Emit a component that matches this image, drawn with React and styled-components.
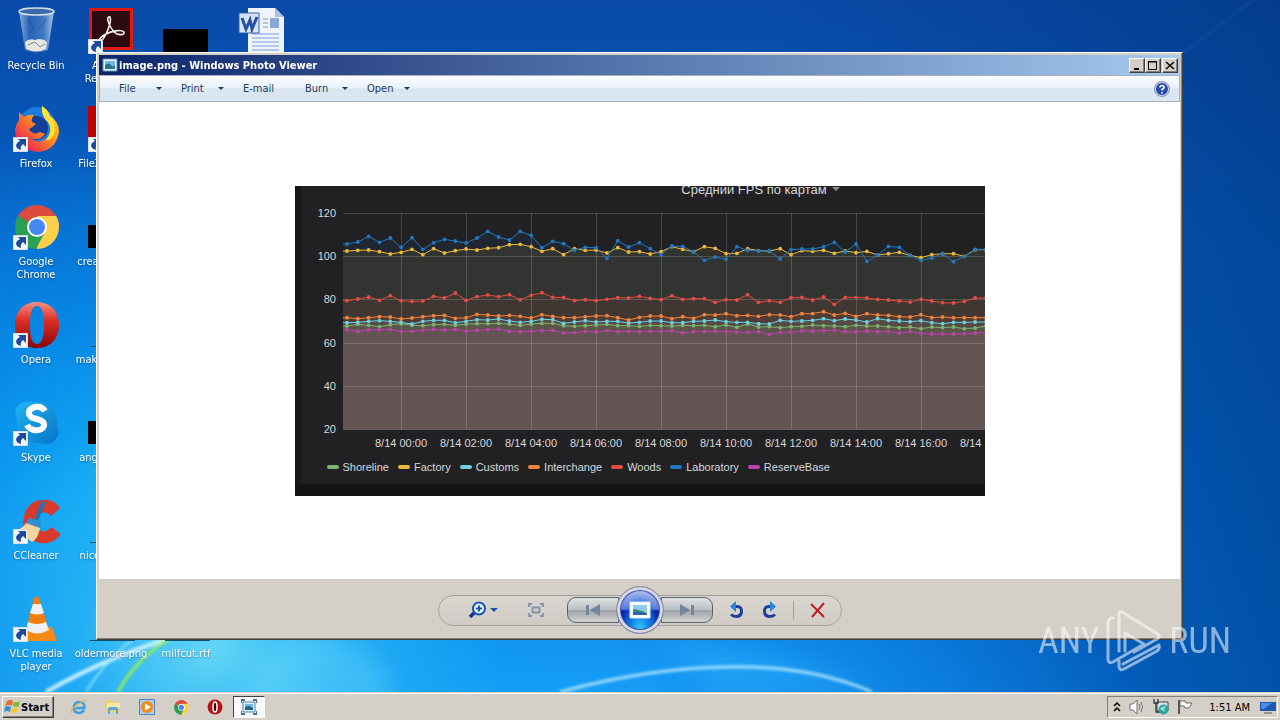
import styled, { createGlobalStyle, css } from "styled-components"

const SERIES = [
    {
        name: "Shoreline",
        color: "#7eb26d",
        fill: 0.12,
        points: [438, 433, 436, 440, 434, 431, 436, 437, 434, 433, 436, 432, 431, 431, 430, 432, 436, 432, 430, 430, 437, 439, 437, 435, 433, 437, 437, 439, 436, 437, 438, 436, 437, 436, 440, 435, 442, 432, 441, 440, 443, 440, 439, 435, 437, 438, 440, 436, 438, 438, 440, 443, 441, 446, 441, 443, 441, 446, 444, 438],
    },
    {
        name: "Factory",
        color: "#eab839",
        fill: 0.09,
        points: [213, 211, 210, 215, 222, 217, 208, 224, 206, 219, 212, 207, 210, 205, 203, 194, 193, 200, 214, 206, 224, 206, 211, 210, 219, 203, 216, 215, 222, 215, 200, 208, 215, 200, 205, 221, 220, 206, 212, 213, 206, 224, 212, 214, 211, 220, 213, 218, 214, 225, 221, 217, 226, 233, 224, 221, 221, 229, 209, 209],
    },
    {
        name: "Customs",
        color: "#6ed0e0",
        fill: 0.12,
        points: [428, 427, 424, 422, 424, 427, 432, 424, 421, 421, 428, 424, 419, 420, 417, 423, 427, 424, 418, 419, 430, 426, 422, 426, 424, 424, 429, 427, 423, 423, 428, 428, 424, 423, 420, 425, 427, 427, 431, 432, 421, 424, 423, 421, 416, 422, 417, 420, 426, 416, 421, 423, 425, 422, 428, 431, 427, 427, 426, 426],
    },
    {
        name: "Interchange",
        color: "#ef843c",
        fill: 0.1,
        points: [413, 416, 413, 410, 411, 417, 414, 410, 407, 406, 415, 413, 403, 405, 408, 406, 409, 414, 404, 409, 413, 413, 410, 408, 407, 413, 420, 412, 408, 408, 416, 410, 415, 404, 405, 401, 407, 406, 409, 404, 405, 410, 401, 401, 395, 405, 400, 409, 401, 405, 406, 410, 411, 404, 413, 411, 413, 413, 413, 413],
    },
    {
        name: "Woods",
        color: "#e24d42",
        fill: 0.1,
        points: [362, 357, 351, 361, 347, 362, 364, 363, 349, 354, 339, 361, 350, 345, 350, 344, 359, 346, 338, 352, 352, 362, 359, 362, 358, 353, 354, 349, 355, 359, 347, 358, 356, 356, 367, 359, 360, 344, 367, 362, 367, 353, 352, 360, 351, 373, 352, 352, 354, 358, 360, 363, 366, 358, 363, 368, 369, 364, 354, 354],
    },
    {
        name: "Laboratory",
        color: "#1f78c1",
        fill: 0.08,
        points: [192, 186, 169, 187, 174, 202, 173, 208, 188, 178, 183, 189, 174, 154, 171, 180, 154, 166, 203, 184, 191, 211, 202, 203, 235, 182, 201, 188, 206, 224, 198, 199, 215, 241, 231, 238, 200, 211, 213, 212, 237, 209, 207, 207, 200, 187, 216, 192, 244, 225, 199, 202, 226, 241, 234, 221, 245, 229, 208, 208],
    },
    {
        name: "ReserveBase",
        color: "#ba43a9",
        fill: 0.1,
        points: [449, 454, 450, 449, 448, 454, 454, 451, 448, 450, 448, 454, 451, 449, 447, 454, 454, 454, 452, 451, 459, 458, 454, 456, 452, 455, 454, 455, 454, 454, 452, 459, 455, 454, 454, 454, 456, 457, 455, 463, 457, 457, 453, 453, 452, 451, 455, 456, 453, 455, 455, 459, 455, 460, 462, 462, 462, 461, 459, 458],
    },
]

const HOURS = ["00", "02", "04", "06", "08", "10", "12", "14", "16", "18"]
const LEVELS = [120, 100, 80, 60, 40, 20]

const px = (i) => 52 + i * 10.83
const py = (v) => v / 3 - 6

function Chart() {
    return (
        <ChartFrame>
            <ChartPanel>
                <ChartTitle>
                    Средний FPS по картам <Caret $color="#8e8e90" />
                </ChartTitle>
                <ChartPlot viewBox="0 0 690 251" role="img" aria-label="Средний FPS по картам">
                    {LEVELS.map((level, i) => (
                        <text key={level} x="41" y={31 + i * 43.2} textAnchor="end">{level}</text>
                    ))}
                    {HOURS.map((hour, i) => (
                        <text key={hour} x={106 + i * 65} y="261" textAnchor="middle">8/14 {hour}:00</text>
                    ))}
                    {SERIES.map((s) => (
                        <path
                            key={s.name}
                            d={`M48 243.5V${py(s.points[0])}L${s.points.map((v, i) => `${px(i)} ${py(v)}`).join("L")}V243.5Z`}
                            fill={s.color}
                            fillOpacity={s.fill}
                        />
                    ))}
                    <g stroke="#fff" strokeOpacity="0.17">
                        {LEVELS.map((level, i) => (
                            <path key={level} d={`M48 ${Math.round(27 + i * 43.2) + 0.5}H690`} />
                        ))}
                        {HOURS.slice(0, 9).map((hour, i) => (
                            <path key={hour} d={`M${106.5 + i * 65} 27V243.5`} />
                        ))}
                    </g>
                    {SERIES.map((s) => (
                        <g key={s.name} fill={s.color}>
                            <path
                                d={`M48 ${py(s.points[0])}L${s.points.map((v, i) => `${px(i)} ${py(v)}`).join("L")}`}
                                fill="none"
                                stroke={s.color}
                            />
                            {s.points.map((v, i) => <circle key={i} cx={px(i)} cy={py(v)} r="1.9" />)}
                        </g>
                    ))}
                </ChartPlot>
                <Legend>
                    {SERIES.map((s) => (
                        <LegendItem key={s.name} $color={s.color}>{s.name}</LegendItem>
                    ))}
                </Legend>
            </ChartPanel>
        </ChartFrame>
    )
}

function BinIcon() {
    return (
        <svg viewBox="0 0 48 48">
            <defs>
                <linearGradient id="bin">
                    <stop offset="0" stopColor="#a9c6e8" stopOpacity=".8" />
                    <stop offset=".3" stopColor="#2f68b8" stopOpacity=".8" />
                    <stop offset=".7" stopColor="#4c84cc" stopOpacity=".8" />
                    <stop offset="1" stopColor="#cfe0f2" stopOpacity=".8" />
                </linearGradient>
            </defs>
            <path d="M7 5L13 44Q24 49 36 44L42 5Z" fill="url(#bin)" />
            <path d="M13 36Q17 32 23 34Q30 31 35 36L34 43Q24 48 14 43Z" fill="#e9e6df" />
            <path d="M16 39L23 36L28 41L33 38M15 13L22 23L17 28M35 12Q31 20 26 22" stroke="#1d4d8c" fill="none" opacity=".6" />
            <ellipse cx="24.500" cy="5.500" rx="17.500" ry="3.500" fill="#3a6cab" stroke="#d6dde4" strokeWidth="1.500" />
        </svg>
    )
}

function AcrobatIcon() {
    return (
        <svg viewBox="0 0 48 48">
            <path d="M2 2H46V44H2Z" fill="#e01b10" />
            <path d="M5 5H43V41H5Z" fill="#2c0a10" />
            <path d="M23 11C18 10 22 20 27 26C31 30 38 29 37 26C34 23 24 25 17 29C11 33 9 38 13 36C19 32 25 15 23 11Z" fill="none" stroke="#f4efef" strokeWidth="1.600" />
        </svg>
    )
}

function WordIcon() {
    return (
        <svg viewBox="0 0 48 48">
            <path d="M11 2H38L47 11V48H11Z" fill="#eef3fc" />
            <path d="M38 2L47 11H38Z" fill="#a9bfe6" />
            <path d="M26 13H31M26 17H31M26 21H31M15 28H42M15 32H42M15 36H42M15 40H42M15 44H42" stroke="#7d9bd1" />
            <path d="M33 12H42V22H33Z" fill="#8ba7da" />
            <path d="M2 7H22V27H2Z" fill="#d7e3f7" stroke="#3b62ac" />
            <path d="M5 12L9 23L13 14L15 23L20 11" fill="none" stroke="#24509f" strokeWidth="3" />
        </svg>
    )
}

function FirefoxIcon() {
    return (
        <svg viewBox="0 0 48 48">
            <defs>
                <linearGradient id="fox" x1="1" y1="0" x2=".2" y2=".8">
                    <stop offset="0" stopColor="#fff13d" />
                    <stop offset=".45" stopColor="#ffa51a" />
                    <stop offset="1" stopColor="#f0304a" />
                </linearGradient>
            </defs>
            <circle cx="25" cy="21" r="18" fill="#1a7be0" />
            <circle cx="24" cy="24" r="12" fill="#133f98" />
            <path d="M7 8L12 13Q16 10 22 11Q19 15 20 18L24 20Q20 24 17 25Q21 32 28 28L33 30Q27 38 18 34Q27 41 35 34Q41 26 36 18Q29 12 30 2Q36 7 37 11Q47 17 47 28Q44 47 25 48Q4 45 3 26Q4 20 7 16Z" fill="url(#fox)" />
            <path d="M30 2Q37 7 38 12Q45 19 42 30Q39 37 34 36Q42 26 36 18Q29 12 30 2Z" fill="#ffe436" />
        </svg>
    )
}

function FileZillaIcon() {
    return (
        <svg viewBox="0 0 48 48">
            <path d="M1 2H47V48H1Z" fill="#bf0000" />
            <path d="M12 10H38L35 16H19V21H31L28 27H19V38H12Z" fill="#fff" />
        </svg>
    )
}

function ChromeIcon() {
    return (
        <svg viewBox="0 0 48 48">
            <path d="M25 25L6 14A22 22 0 0 1 44 14Z" fill="#dd4b3e" />
            <path d="M25 25L44 14A22 22 0 0 1 25 47Z" fill="#fdd04a" />
            <path d="M25 25L25 47A22 22 0 0 1 6 14Z" fill="#2b9f52" />
            <path d="M25 14H44A22 22 0 0 1 47 25L34 29Z" fill="#fdd04a" />
            <path d="M16 30L6 14L16 21ZM33 30L24 47L21 34Z" fill="#2b9f52" />
            <circle cx="25" cy="25" r="10" fill="#fff" />
            <circle cx="25" cy="25" r="8" fill="#4688f1" />
        </svg>
    )
}

function OperaIcon() {
    return (
        <svg viewBox="0 0 48 48">
            <defs>
                <linearGradient id="opera" x2="0" y2="1">
                    <stop offset="0" stopColor="#f78f82" />
                    <stop offset=".4" stopColor="#dc2e24" />
                    <stop offset="1" stopColor="#8b0408" />
                </linearGradient>
            </defs>
            <path d="M25 2C38 2 47 11 47 25S38 48 25 48S3 39 3 25S12 2 25 2ZM25 6C20 6 18 13 18 25S20 44 25 44S32 36 32 25S30 6 25 6Z" fill="url(#opera)" fillRule="evenodd" />
        </svg>
    )
}

function SkypeIcon() {
    return (
        <svg viewBox="0 0 48 48">
            <defs>
                <linearGradient id="skype" x2="1" y2="1">
                    <stop offset="0" stopColor="#21b5f0" />
                    <stop offset="1" stopColor="#0774c7" />
                </linearGradient>
            </defs>
            <path d="M9 5Q15 2 21 4Q37 2 43 14Q46 21 45 28Q49 36 43 42Q37 48 29 45Q12 46 6 33Q4 26 5 20Q0 12 9 5Z" fill="url(#skype)" />
            <path d="M33 13Q30 8 23 9Q16 11 17 16Q18 20 25 21Q33 23 32 28Q30 33 22 32Q17 31 15 27" fill="none" stroke="#fff" strokeWidth="6" />
        </svg>
    )
}

function CCleanerIcon() {
    return (
        <svg viewBox="0 0 48 48">
            <path d="M48 12L39 20Q33 13 26 19Q21 26 27 34Q34 38 39 31L49 38Q41 49 28 47Q10 43 11 26Q13 6 29 4Q42 2 48 12Z" fill="#d83a2b" />
            <path d="M31 7L24 25" stroke="#1678b8" strokeWidth="4" strokeLinecap="round" />
            <path d="M17 22L30 25L28 32L14 27Z" fill="#2f8fd0" />
            <path d="M14 27L28 32Q26 43 20 46L5 34Q11 32 14 27Z" fill="#f6d4a2" />
        </svg>
    )
}

function VlcIcon() {
    return (
        <svg viewBox="0 0 48 48">
            <path d="M12 33H40L45 47H6Z" fill="#f58a16" />
            <path d="M22 4Q25 1 27 4L37 36Q25 44 14 36Z" fill="#f47b0c" />
            <path d="M21 10H29L32 19Q25 22 18 19ZM16 28Q25 32 34 28L37 36Q25 43 14 36Z" fill="#eef0f2" />
        </svg>
    )
}

function ThumbIcon() {
    return (
        <svg viewBox="0 0 48 48">
            <path d="M1 23H46V46H1Z" fill="#000" />
        </svg>
    )
}

function LineIcon() {
    return (
        <svg viewBox="0 0 48 48">
            <path d="M3 46H48V47H3Z" fill="#14506e" />
        </svg>
    )
}

function ShortcutArrow() {
    return (
        <ArrowBadge viewBox="0 0 15 15">
            <path d="M0 0H15V15H0Z" fill="#f3f6fa" stroke="#b9c6d8" />
            <path d="M5 2H13V10L10 7Q7 9 8 13Q3 12 3 8Q4 5 7 4Z" fill="#1d4b9b" />
        </ArrowBadge>
    )
}

const PhotoIcon = () => (
    <svg viewBox="0 0 16 16">
        <path d="M1 2H15V14H1Z" fill="#f2f8fc" stroke="#528fba" />
        <path d="M3 4H13V12H3Z" fill="#72b7e4" />
        <path d="M3 8Q7 5 9 8T13 8V12H3Z" fill="#28708c" />
    </svg>
)

const SHORTCUTS = [
    { label: "Recycle Bin", Icon: BinIcon },
    { label: "Firefox", Icon: FirefoxIcon, link: true },
    { label: "Google Chrome", Icon: ChromeIcon, link: true },
    { label: "Opera", Icon: OperaIcon, link: true },
    { label: "Skype", Icon: SkypeIcon, link: true },
    { label: "CCleaner", Icon: CCleanerIcon, link: true },
    { label: "VLC media player", Icon: VlcIcon, link: true },
    { label: "Acrobat Reader DC", Icon: AcrobatIcon, link: true },
    { label: "FileZilla Clien", Icon: FileZillaIcon, link: true },
    { label: "createhigh.rtf", Icon: ThumbIcon },
    { label: "makeuptop.rtf", Icon: LineIcon },
    { label: "anglemax.rtf", Icon: ThumbIcon },
    { label: "nicefiles.png", Icon: LineIcon },
    { label: "oldermore.png", Icon: LineIcon },
    { label: "", Icon: ThumbIcon, span: 6 },
    { label: "milfcut.rtf", Icon: LineIcon },
    { label: "", Icon: WordIcon },
]

const MENU = [
    { label: "File", drop: true },
    { label: "Print", drop: true },
    { label: "E-mail" },
    { label: "Burn", drop: true },
    { label: "Open", drop: true },
]

function Wallpaper() {
    return (
        <WallpaperArt viewBox="0 0 1280 692" preserveAspectRatio="none">
            <defs>
                <filter id="glow"><feGaussianBlur stdDeviation="1.500" /></filter>
                <filter id="haze" x="-50%" y="-50%" width="200%" height="200%"><feGaussianBlur stdDeviation="12" /></filter>
            </defs>
            <circle cx="320" cy="710" r="75" fill="#8ff0ff" opacity=".25" filter="url(#haze)" />
            <path d="M660 640Q790 650 880 692H720Z" fill="#53d5ff" opacity=".2" filter="url(#haze)" />
            <g fill="none" filter="url(#glow)">
                <path d="M46 692Q110 655 190 632" stroke="#d9f8ff" strokeWidth="4" opacity=".9" />
                <path d="M86 692Q105 660 142 632" stroke="#a8edff" strokeWidth="2" opacity=".8" />
                <path d="M118 692Q138 655 180 632" stroke="#9af04f" strokeWidth="3" />
                <path d="M560 692Q660 665 750 667Q820 669 872 692" stroke="#c9f4ff" strokeWidth="3" opacity=".8" />
                <path d="M1180 55L1260 -5" stroke="#6d9ed6" opacity=".3" />
            </g>
        </WallpaperArt>
    )
}

function PhotoViewer() {
    return (
        <Window>
            <TitleBar>
                <SmallIcon $size={16}><PhotoIcon /></SmallIcon>
                <WindowTitle>image.png - Windows Photo Viewer</WindowTitle>
                <CaptionGroup>
                    <CaptionButton aria-label="Minimize">
                        <svg viewBox="0 0 12 11"><path d="M3 9H8" stroke="#000" strokeWidth="2" /></svg>
                    </CaptionButton>
                    <CaptionButton aria-label="Maximize">
                        <svg viewBox="0 0 12 11"><path d="M1.500 1.500H9.500V9.500H1.500ZM1 2H10" stroke="#000" fill="none" /></svg>
                    </CaptionButton>
                </CaptionGroup>
                <CaptionButton aria-label="Close">
                    <svg viewBox="0 0 12 11"><path d="M2 2L10 9M10 2L2 9" stroke="#000" strokeWidth="1.500" /></svg>
                </CaptionButton>
            </TitleBar>
            <MenuBar>
                {MENU.map((item) => (
                    <MenuButton key={item.label}>
                        {item.label}
                        {item.drop && <Caret $color="#1e395b" $small />}
                    </MenuButton>
                ))}
                <HelpButton aria-label="Help">
                    <svg viewBox="0 0 16 16">
                        <circle cx="8" cy="8" r="7.500" fill="#c7d0e8" stroke="#8490b4" />
                        <circle cx="8" cy="8" r="6" fill="#2748ad" />
                        <path d="M6 6.500Q6 4.500 8 4.500T10 6.500Q10 7.500 8 8.500V9.500M8 11V12.500" fill="none" stroke="#fff" strokeWidth="1.600" />
                    </svg>
                </HelpButton>
            </MenuBar>
            <Canvas>
                <Chart />
            </Canvas>
            <ControlArea>
                <ControlPill>
                    <ControlGroup $gap={30} $inset={30}>
                        <ZoomButton aria-label="Zoom">
                            <svg width="18" height="18" viewBox="0 0 18 18">
                                <path d="M6 11L1 16" stroke="#17349a" strokeWidth="3.500" />
                                <circle cx="10" cy="7.500" r="6" fill="#e5f1fb" stroke="#1a54bd" strokeWidth="2" />
                                <path d="M7 7.500H13M10 4.500V10.500" stroke="#1a54bd" strokeWidth="2" />
                            </svg>
                            <Caret $color="#1b55b4" />
                        </ZoomButton>
                        <PlainButton aria-label="Fit to window">
                            <svg width="16" height="14" viewBox="0 0 16 14">
                                <path d="M1 4V1H4M12 1H15V4M15 10V13H12M4 13H1V10M4.500 4.500H11.500V9.500H4.500Z" fill="none" stroke="#8191ab" strokeWidth="1.800" />
                            </svg>
                        </PlainButton>
                    </ControlGroup>
                    <NavGroup>
                        <NavButton aria-label="Previous">
                            <svg width="14" height="12" viewBox="0 0 14 12"><path d="M0 1H3V11H0ZM14 0V12L4 6Z" fill="#75859f" /></svg>
                        </NavButton>
                        <PlayButton aria-label="Play slide show">
                            <svg width="22" height="18" viewBox="0 0 22 18">
                                <path d="M1 1H21V17H1Z" fill="#fff" stroke="#dbe4f5" />
                                <path d="M4 4H18V14H4Z" fill="#8ecbf0" />
                                <path d="M4 8Q9 8 18 12V14H4Z" fill="#42936e" />
                                <path d="M4 11Q10 9 18 13V14H4Z" fill="#2a66a2" />
                            </svg>
                        </PlayButton>
                        <NavButton aria-label="Next" $right>
                            <svg width="14" height="12" viewBox="0 0 14 12"><path d="M11 1H14V11H11ZM0 0V12L10 6Z" fill="#75859f" /></svg>
                        </NavButton>
                    </NavGroup>
                    <ControlGroup $gap={16} $inset={16}>
                        <PlainButton aria-label="Rotate counterclockwise">
                            <svg width="16" height="18" viewBox="0 0 16 18">
                                <path d="M5 5.500H8Q13 5.500 12.500 11Q12 15.500 7 15.500Q4 15.500 2 13.500" fill="none" stroke="#1e3f9c" strokeWidth="3" />
                                <path d="M7 0V11L1 5.500Z" fill="#2384d8" />
                            </svg>
                        </PlainButton>
                        <PlainButton aria-label="Rotate clockwise">
                            <svg width="16" height="18" viewBox="0 0 16 18">
                                <path d="M11 5.500H8Q3 5.500 3.500 11Q4 15.500 9 15.500Q12 15.500 14 13.500" fill="none" stroke="#1e3f9c" strokeWidth="3" />
                                <path d="M9 0V11L15 5.500Z" fill="#2384d8" />
                            </svg>
                        </PlainButton>
                        <Divider />
                        <PlainButton aria-label="Delete">
                            <svg width="16" height="16" viewBox="0 0 16 16"><path d="M1 2L14 15M14 1L2 15" stroke="#bd2026" strokeWidth="2" /></svg>
                        </PlainButton>
                    </ControlGroup>
                </ControlPill>
            </ControlArea>
        </Window>
    )
}

function Watermark() {
    return (
        <Brand>
            <span>ANY</span>
            <svg width="56" height="64" viewBox="0 0 56 64" fill="none" stroke="#fff" strokeWidth="3" strokeLinejoin="round" strokeLinecap="round">
                <path d="M13 42V5Q13 2 16 3L52 25Q55 28 51 30L28 43" />
                <path d="M7 9Q2 9 2 14V51Q3 55 7 53L38 35L19 24V42" />
                <path d="M13 52V58Q14 62 18 60L51 42Q54 40 53 36L17 55" />
            </svg>
            <span>RUN</span>
        </Brand>
    )
}

function Taskbar() {
    return (
        <Bar>
            <StartButton>
                <svg width="17" height="16" viewBox="0 0 17 16">
                    <path d="M3 2Q6 0 9 2L8 7Q5 5 1 7Z" fill="#ed6a2c" />
                    <path d="M10 3Q13 4 16 2L15 7Q12 9 9 7Z" fill="#7cb93d" />
                    <path d="M1 8Q4 6 7 8L6 13Q3 11 0 13Z" fill="#3a8fd6" />
                    <path d="M8 9Q11 10 14 8L13 13Q10 15 7 13Z" fill="#f9c827" />
                </svg>
                Start
            </StartButton>
            <QuickLaunch>
                <TaskButton aria-label="Internet Explorer">
                    <svg viewBox="0 0 16 16">
                        <path d="M13 11Q11 14 8 14Q3 14 3 8.500T8.500 3Q14 3 13.500 9H5" fill="none" stroke="#3aa0e3" strokeWidth="2.500" />
                        <path d="M1 14Q-1 10 7 5T15 2" fill="none" stroke="#e8b33a" strokeWidth="1.300" />
                    </svg>
                </TaskButton>
                <TaskButton aria-label="Windows Explorer">
                    <svg viewBox="0 0 16 16">
                        <path d="M1 1H6L7 3H14V13H1Z" fill="#f0cf70" />
                        <path d="M2 4H15V9H2Z" fill="#fae9a8" />
                        <path d="M3 15V10Q3 8 5 8H11Q13 8 13 10V15H11V11H5V15Z" fill="#57a9dd" />
                    </svg>
                </TaskButton>
                <TaskButton aria-label="Media Player">
                    <svg viewBox="0 0 16 16">
                        <path d="M.5 .5H15.500V15.500H.5Z" fill="#a9cdf0" stroke="#4f86c0" />
                        <circle cx="8" cy="8" r="6" fill="#f58a1c" />
                        <path d="M6 4.500L12 8L6 11.500Z" fill="#fff" />
                    </svg>
                </TaskButton>
                <TaskButton aria-label="Google Chrome"><ChromeIcon /></TaskButton>
                <TaskButton aria-label="Opera">
                    <svg viewBox="0 0 16 16">
                        <circle cx="8" cy="8" r="7.500" fill="#b81219" />
                        <ellipse cx="8" cy="8" rx="2" ry="5" fill="#4f0508" stroke="#fff" strokeWidth="1.500" />
                    </svg>
                </TaskButton>
                <TaskButton aria-label="Photo Viewer" $active>
                    <svg viewBox="0 0 16 16">
                        <path d="M0 4V1H4M12 1H16V4M16 12V15H12M4 15H0V12" fill="none" stroke="#3d6f9c" strokeWidth="2" />
                        <path d="M2 3H14V13H2Z" fill="#dceefa" stroke="#4888b5" />
                        <path d="M4 5H12V11H4Z" fill="#6fb7e2" />
                        <path d="M4 8L8 7L12 9V11H4Z" fill="#22627f" />
                    </svg>
                </TaskButton>
            </QuickLaunch>
            <Tray>
                <SmallIcon $size={8}>
                    <svg viewBox="0 0 8 10"><path d="M1 4L4 1L7 4M1 9L4 6L7 9" fill="none" stroke="#000" strokeWidth="1.500" /></svg>
                </SmallIcon>
                <SmallIcon $size={16}>
                    <svg viewBox="0 0 16 16">
                        <path d="M1 5H4L8 1V15L4 11H1Z" fill="#fff" stroke="#6f6f6f" />
                        <path d="M10 5Q12 8 10 11M12 3Q15 8 12 13" fill="none" stroke="#777" />
                    </svg>
                </SmallIcon>
                <SmallIcon $size={16}>
                    <svg viewBox="0 0 16 16">
                        <path d="M4 3H15V12H4Z" fill="#dbe6ea" stroke="#444" />
                        <path d="M1 0V4H5V0M3 4V13H7" fill="none" stroke="#333" strokeWidth="1.300" />
                        <circle cx="10.500" cy="10.500" r="5" fill="#29a3a0" />
                        <path d="M7 10Q10 6 13 8Q10 10 12 13" fill="#9ce0d0" />
                    </svg>
                </SmallIcon>
                <SmallIcon $size={16}>
                    <svg viewBox="0 0 16 16">
                        <path d="M2 1V15" stroke="#555" strokeWidth="2" />
                        <path d="M3 2H8L9 4H15L12 9H8L7 7H3Z" fill="#fff" stroke="#666" />
                    </svg>
                </SmallIcon>
                <Clock>1:51 AM</Clock>
                <SmallIcon $size={16}>
                    <svg viewBox="0 0 16 16">
                        <path d="M0 3H16V12H0Z" fill="#1f57b5" />
                        <path d="M1 4H12L4 10H1Z" fill="#4f8be0" />
                        <path d="M4 14H12" stroke="#555" />
                    </svg>
                </SmallIcon>
            </Tray>
        </Bar>
    )
}

function App() {
    return (
        <>
            <GlobalStyle />
            <Screen>
                <Desktop>
                    <Wallpaper />
                    <IconGrid>
                        {SHORTCUTS.map(({ label, Icon, link, span }, i) => (
                            <Shortcut key={i} $span={span} aria-label={label || "Document"}>
                                <ShortcutArt>
                                    <Icon />
                                    {link && <ShortcutArrow />}
                                </ShortcutArt>
                                <ShortcutLabel>{label}</ShortcutLabel>
                            </Shortcut>
                        ))}
                    </IconGrid>
                    <PhotoViewer />
                    <Watermark />
                </Desktop>
                <Taskbar />
            </Screen>
        </>
    )
}

const GlobalStyle = createGlobalStyle`
    * {
        box-sizing: border-box;
    }

    body {
        margin: 0;
        font-family: "DejaVu Sans Condensed", "Noto Sans", sans-serif;
        font-size: 11px;
    }

    button {
        padding: 0;
        border: 0;
        background: none;
        color: inherit;
        font: inherit;
    }

    svg {
        display: block;
    }
`

const raised = css`
    border: 1px solid;
    border-color: #fff #404040 #404040 #fff;
    box-shadow: inset -1px -1px 0 #848078;
`

const Screen = styled.div`
    display: flex;
    flex-direction: column;
    height: 100vh;
    overflow: hidden;
`

const Desktop = styled.main`
    position: relative;
    flex: 1;
    min-height: 0;
    overflow: hidden;
    background:
        radial-gradient(ellipse 300px 240px at 210px 650px, #62d6f6 0%, rgba(50, 190, 248, 0.6) 45%, transparent 100%),
        radial-gradient(ellipse 520px 380px at 170px 500px, #14b4fa 0%, rgba(8, 150, 240, 0.7) 50%, transparent 100%),
        radial-gradient(ellipse 620px 180px at 520px 700px, #1ba4fa 0%, transparent 100%),
        linear-gradient(90deg, transparent 60%, rgba(0, 50, 120, 0.55) 100%),
        linear-gradient(180deg, #0a4aa8 0%, #0560c4 35%, #0478e4 100%);
`

const WallpaperArt = styled.svg`
    position: absolute;
    inset: 0;
    width: 100%;
    height: 100%;
`

const IconGrid = styled.div`
    position: relative;
    display: grid;
    grid-template-rows: repeat(7, 98px);
    grid-auto-columns: 72px;
    grid-auto-flow: column;
    column-gap: 3px;
`

const Shortcut = styled.button`
    display: flex;
    flex-direction: column;
    align-items: center;
    gap: 5px;
    padding-top: 6px;
    grid-row: ${({ $span }) => ($span ? `span ${$span}` : "auto")};
`

const ShortcutArt = styled.span`
    position: relative;
    width: 48px;
    height: 48px;
`

const ArrowBadge = styled.svg`
    position: absolute;
    left: 1px;
    bottom: 0;
    width: 15px;
    height: 15px;
`

const ShortcutLabel = styled.span`
    color: #fff;
    line-height: 13px;
    text-align: center;
    text-shadow: 0 1px 2px rgba(0, 30, 80, 0.5);
`

const Window = styled.section`
    position: absolute;
    inset: 52px 97px 52px 96px;
    display: flex;
    flex-direction: column;
    padding: 2px;
    background: #d4d0c8;
    ${raised}
`

const TitleBar = styled.header`
    display: flex;
    align-items: center;
    gap: 1px;
    height: 20px;
    flex: none;
    padding: 0 2px 0 3px;
    color: #fff;
    background: linear-gradient(90deg, #0a246a, #a6caf0);
`

const WindowTitle = styled.h1`
    flex: 1;
    margin: 0;
    font-size: 11px;
    font-weight: 700;
`

const CaptionGroup = styled.div`
    display: flex;
`

const CaptionButton = styled.button`
    width: 16px;
    height: 15px;
    background: #d4d0c8;
    ${raised}

    svg {
        width: 12px;
        height: 11px;
        margin: 0 auto;
    }
`

const MenuBar = styled.nav`
    display: flex;
    align-items: center;
    flex: none;
    height: 27px;
    padding: 0 9px 0 19px;
    color: #1e395b;
    background: linear-gradient(180deg, #fbfdff 0%, #e8f1f9 48%, #d8e6f2 52%, #dbe8f4 100%);
    border: 1px solid #a6b1be;
`

const MenuButton = styled.button`
    display: flex;
    align-items: center;
    justify-content: space-between;
    width: 62px;
    height: 24px;
    padding-right: 19px;
    white-space: nowrap;
`

const Caret = styled.span`
    display: inline-block;
    border: ${({ $small }) => ($small ? 3 : 4)}px solid transparent;
    border-top-color: ${({ $color }) => $color};
    border-bottom: 0;
`

const HelpButton = styled.button`
    width: 16px;
    height: 16px;
    margin-left: auto;
`

const Canvas = styled.div`
    display: flex;
    align-items: center;
    justify-content: center;
    flex: 1;
    min-height: 0;
    background: #fff;
`

const ChartFrame = styled.div`
    width: 690px;
    height: 310px;
    overflow: hidden;
    background: #141416;
    font-family: "Liberation Sans", Arial, sans-serif;
    color: #d8d9da;
`

const ChartPanel = styled.div`
    height: 298px;
    background: linear-gradient(90deg, #161719 6px, #212124 6px);
`

const ChartTitle = styled.h2`
    display: flex;
    align-items: center;
    justify-content: center;
    gap: 5px;
    height: 16px;
    margin: 0;
    padding: 0 0 9px 242px;
    font-size: 13px;
    font-weight: 400;
    line-height: 15px;
`

const ChartPlot = styled.svg`
    width: 690px;
    height: 251px;
    margin-top: -16px;
    overflow: visible;

    text {
        fill: #d8d9da;
        font-size: 11px;
    }
`

const Legend = styled.ul`
    display: flex;
    gap: 9px;
    margin: 0;
    padding: 24px 0 0 32px;
    list-style: none;
`

const LegendItem = styled.li`
    display: flex;
    align-items: center;
    gap: 4px;
    font-size: 11px;
    line-height: 13px;

    &::before {
        content: "";
        width: 12px;
        height: 4px;
        border-radius: 2px;
        background: ${({ $color }) => $color};
    }
`

const ControlArea = styled.footer`
    display: flex;
    align-items: center;
    justify-content: center;
    flex: none;
    height: 58px;
    padding-top: 4px;
`

const ControlPill = styled.div`
    display: grid;
    grid-template-columns: minmax(0, 1fr) auto minmax(0, 1fr);
    align-items: center;
    width: 404px;
    height: 31px;
    border: 1px solid #a3a19d;
    border-radius: 16px;
    background: linear-gradient(180deg, #dad7d0, #d0ccc5);
`

const ControlGroup = styled.div`
    display: flex;
    align-items: center;
    gap: ${({ $gap }) => $gap}px;
    padding-left: ${({ $inset }) => $inset}px;
`

const PlainButton = styled.button`
    flex: none;
`

const ZoomButton = styled(PlainButton)`
    display: flex;
    align-items: center;
    gap: 3px;
`

const NavGroup = styled.div`
    display: flex;
    align-items: center;
    height: 29px;
`

const NavButton = styled.button`
    display: flex;
    align-items: center;
    justify-content: center;
    width: 52px;
    height: 26px;
    border: 1px solid #5c6068;
    border-radius: ${({ $right }) => ($right ? "0 9px 9px 0" : "9px 0 0 9px")};
    background: linear-gradient(180deg, #dfe1e3 0%, #bdc1c4 48%, #9ea3a8 52%, #d3d4d4 100%);
`

const PlayButton = styled.button`
    position: relative;
    display: flex;
    align-items: center;
    justify-content: center;
    width: 48px;
    height: 48px;
    margin: 0 -3px;
    border: 1px solid #8a90a0;
    border-radius: 50%;
    background: radial-gradient(ellipse at 50% 100%, #32d7ff 0%, #1275e0 35%, transparent 60%), linear-gradient(180deg, #b9c9f3 0%, #5b7bd9 48%, #0a1fa2 52%, #1342bf 100%);
    box-shadow: inset 0 0 0 3px #d9d9e4, inset 0 0 0 4px #4057a8;
`

const Divider = styled.span`
    width: 1px;
    height: 18px;
    background: #a09e99;
`

const Brand = styled.div`
    position: absolute;
    right: 49px;
    bottom: 19px;
    display: flex;
    align-items: center;
    gap: 7px;
    color: #fff;
    font-family: "Roboto Condensed", "Open Sans Condensed", Roboto, sans-serif;
    font-size: 36px;
    opacity: 0.55;
`

const Bar = styled.footer`
    display: flex;
    align-items: center;
    flex: none;
    height: 28px;
    padding: 1px 2px 0;
    border-top: 1px solid #d4d0c8;
    box-shadow: inset 0 1px 0 #fff;
    background: #d4d0c8;
`

const StartButton = styled.button`
    display: flex;
    align-items: center;
    height: 22px;
    padding: 0 4px 0 1px;
    font-weight: 700;
    ${raised}
`

const QuickLaunch = styled.div`
    display: flex;
    margin-left: 8px;
`

const TaskButton = styled.button`
    display: flex;
    align-items: center;
    justify-content: center;
    width: 32px;
    height: 22px;
    margin: 0 1px;
    ${({ $active }) => $active && css`
        border: 1px solid;
        border-color: #404040 #fff #fff #404040;
        background: #fbfaf8;
    `}

    svg {
        width: 16px;
        height: 16px;
    }
`

const Tray = styled.div`
    display: flex;
    align-items: center;
    gap: 8px;
    height: 22px;
    margin-left: auto;
    padding: 0 1px 0 5px;
    border: 1px solid;
    border-color: #848078 #fff #fff #848078;
`

const SmallIcon = styled.span`
    width: ${({ $size }) => $size}px;
    flex: none;
`

const Clock = styled.time`
    padding: 0 2px 0 8px;
`

export default App
